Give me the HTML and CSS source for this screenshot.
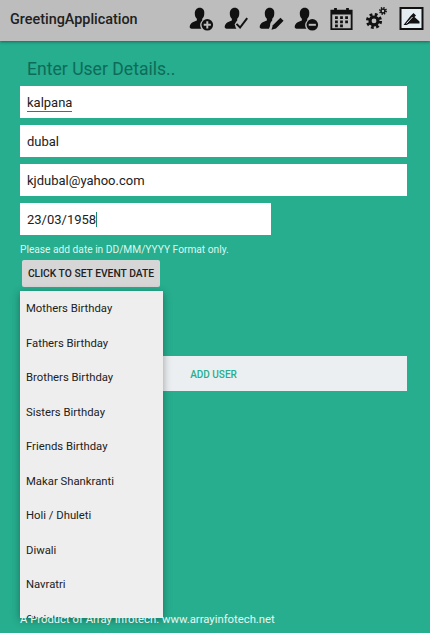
FILE: index.html
```html
<!DOCTYPE html>
<html lang="en">
<head>
    <meta charset="UTF-8">
    <meta name="viewport" content="width=device-width, initial-scale=1.0">
    <title>GreetingApplication</title>
    <link rel="stylesheet" href="styles.css">
</head>
<body>
    <svg class="icon-defs" width="0" height="0">
        <defs>
            <path id="person" d="M12 0.500C8.400 0.500 6.500 3.300 6.500 7c0 2.400.9 4.400 2.300 5.600v2.200C5.200 16 1.400 17.600.8 21.500c-.2 1.500.7 2.500 2.200 2.500H14c-1-1.200-1.500-2.700-1.500-4.300 0-2 .9-3.800 2.300-5v-2.100c1.400-1.200 2.300-3.200 2.300-5.600C17.600 3.300 15.600.5 12 .5z"/>
        </defs>
    </svg>

    <header class="toolbar">
        <span class="app-title">GreetingApplication</span>
        <div class="toolbar-icons">
            <svg class="tool-icon" viewBox="0 0 28 26">
                <use href="#person"/>
                <circle cx="20.500" cy="19.500" r="6.500"/>
                <path class="cut" d="M20.500 15.500v8M16.500 19.500h8"/>
            </svg>
            <svg class="tool-icon" viewBox="0 0 28 26">
                <use href="#person"/>
                <path class="cut-wide" d="M13 18l5 5 9-12"/>
                <path class="tick" d="M14 18.500l4 4 8-10.500"/>
            </svg>
            <svg class="tool-icon" viewBox="0 0 28 26">
                <use href="#person"/>
                <path class="cut-wide" d="M13 24l2-5 9-9 3 3-9 9z"/>
                <path d="M14 25l1.500-5 8.500-8.500 3.500 3.500-8.500 8.500z"/>
            </svg>
            <svg class="tool-icon" viewBox="0 0 28 26">
                <use href="#person"/>
                <circle cx="20.500" cy="19.500" r="6.500"/>
                <path class="cut" d="M16.500 19.500h8"/>
            </svg>
            <svg class="tool-icon" viewBox="0 0 26 26">
                <path d="M1 3h4V1h3v2h10V1h3v2h4v22H1zM3 8v15h20V8z"/>
                <path d="M6 10h3v3H6zM11.500 10h3v3h-3zM17 10h3v3h-3zM6 14.500h3v3H6zM11.500 14.500h3v3h-3zM17 14.500h3v3h-3zM11.500 19h3v3h-3zM6 19h3v3H6z"/>
            </svg>
            <svg class="tool-icon" viewBox="0 0 26 26">
                <circle cx="10.300" cy="15.100" r="6"/>
                <circle class="gear-teeth" cx="10.300" cy="15.100" r="7"/>
                <circle class="hole" cx="10.300" cy="15.100" r="2.600"/>
                <circle cx="20" cy="4.300" r="2.800"/>
                <circle class="gear-small-teeth" cx="20" cy="4.300" r="3.300"/>
                <circle class="hole" cx="20" cy="4.300" r="1.300"/>
            </svg>
            <svg class="tool-icon" viewBox="0 0 24 24">
                <path d="M0 0h24v23H0z"/>
                <path class="pale" d="M2 2h20v19H2z"/>
                <path d="M4 18l7-9 3-3 2.500 2.500-1.500 1.500 5 4.500v2H10l-3 1.500z"/>
                <path class="pale-line" d="M7 16.500l6-6.500"/>
            </svg>
        </div>
    </header>

    <main class="content">
        <h1 class="form-title">Enter User Details..</h1>
        <div class="field"><span class="misspelt">kalpana</span></div>
        <div class="field">dubal</div>
        <div class="field">kjdubal@yahoo.com</div>
        <div class="field field-short"><span class="caret">23/03/1958</span></div>
        <p class="hint">Please add date in DD/MM/YYYY Format only.</p>
        <button class="event-btn">CLICK TO SET EVENT DATE</button>
        <button class="add-btn">ADD USER</button>
    </main>

    <ul class="event-menu">
        <li>Mothers Birthday</li>
        <li>Fathers Birthday</li>
        <li>Brothers Birthday</li>
        <li>Sisters Birthday</li>
        <li>Friends Birthday</li>
        <li>Makar Shankranti</li>
        <li>Holi / Dhuleti</li>
        <li>Diwali</li>
        <li>Navratri</li>
        <li>Christmas</li>
    </ul>

    <footer class="footer">A Product of Array Infotech. www.arrayinfotech.net</footer>
</body>
</html>
```

FILE: styles.css
```css
* {
    box-sizing: border-box;
}
html, body {
    margin: 0;
    height: 633px;
    overflow: hidden;
}
body {
    position: relative;
    display: flex;
    flex-direction: column;
    font-family: Roboto, sans-serif;
    background-color: #26ae8e;
}
.icon-defs {
    position: absolute;
}
.toolbar {
    display: flex;
    align-items: center;
    justify-content: space-between;
    height: 41px;
    padding: 0 6px 0 10px;
    background-color: #bdbdbd;
    box-shadow: 0 1px 3px rgba(0,0,0,0.4);
}
.app-title {
    margin-bottom: 3px;
    font-size: 14.400px;
    font-weight: 500;
    color: #212121;
}
.toolbar-icons {
    display: flex;
    align-items: center;
    gap: 10px;
    margin-bottom: 3px;
}
.tool-icon {
    width: 25px;
    height: 24px;
    overflow: visible;
    fill: #111;
}
.tool-icon .cut {
    fill: none;
    stroke: #bdbdbd;
    stroke-width: 2.200;
}
.tool-icon .cut-wide {
    fill: none;
    stroke: #bdbdbd;
    stroke-width: 3.500;
}
.tool-icon .tick {
    fill: none;
    stroke: #111;
    stroke-width: 2.200;
}
.tool-icon .gear-teeth {
    fill: none;
    stroke: #111;
    stroke-width: 3.400;
    stroke-dasharray: 2.900 2.600;
}
.tool-icon .gear-small-teeth {
    fill: none;
    stroke: #111;
    stroke-width: 2;
    stroke-dasharray: 1.400 1.190;
}
.tool-icon .hole {
    fill: #bdbdbd;
}
.tool-icon .pale {
    fill: #e4edf2;
}
.tool-icon .pale-line {
    fill: none;
    stroke: #e4edf2;
    stroke-width: 1;
}
.content {
    display: flex;
    flex-direction: column;
    align-items: flex-start;
    padding: 0 23px 0 20px;
}
.form-title {
    margin: 18px 0 6px 7px;
    font-size: 17.600px;
    line-height: 21px;
    font-weight: 400;
    color: #0f6b59;
}
.field {
    width: 100%;
    height: 32px;
    margin-bottom: 7px;
    padding-left: 7px;
    font-size: 13px;
    line-height: 33px;
    color: #212121;
    background-color: #fff;
}
.field-short {
    width: 251px;
    margin-bottom: 0;
}
.misspelt {
    padding-bottom: 1px;
    border-bottom: 1px solid #a8444f;
}
.caret {
    border-right: 1px solid #1f8a75;
}
.hint {
    margin: 9px 0 0;
    font-size: 10.200px;
    line-height: 12px;
    color: #dff6ef;
}
.event-btn {
    margin: 4px 0 0 2px;
    width: 138px;
    height: 27px;
    padding: 0;
    border: none;
    border-radius: 2px;
    font-family: inherit;
    font-size: 10.300px;
    font-weight: 500;
    color: #212121;
    background-color: #d6d6d6;
}
.add-btn {
    margin-top: 69px;
    width: 100%;
    height: 35px;
    padding: 1px 0 0;
    border: none;
    font-family: inherit;
    font-size: 10px;
    font-weight: 500;
    color: #26ae8e;
    background-color: #ebeff2;
}
.event-menu {
    position: absolute;
    left: 20px;
    top: 291px;
    width: 143px;
    height: 327px;
    margin: 0;
    padding: 1px 0 0;
    overflow: hidden;
    list-style: none;
    background-color: #eeeeee;
    box-shadow: 0 2px 8px rgba(0,0,0,0.35);
}
.event-menu li {
    height: 34.500px;
    padding-left: 6px;
    font-size: 11.300px;
    line-height: 34.500px;
    color: #212121;
}
.footer {
    position: relative;
    margin-top: auto;
    margin-bottom: 7px;
    padding-left: 20px;
    font-size: 11.300px;
    line-height: 13px;
    color: #e6f7f2;
}
```
